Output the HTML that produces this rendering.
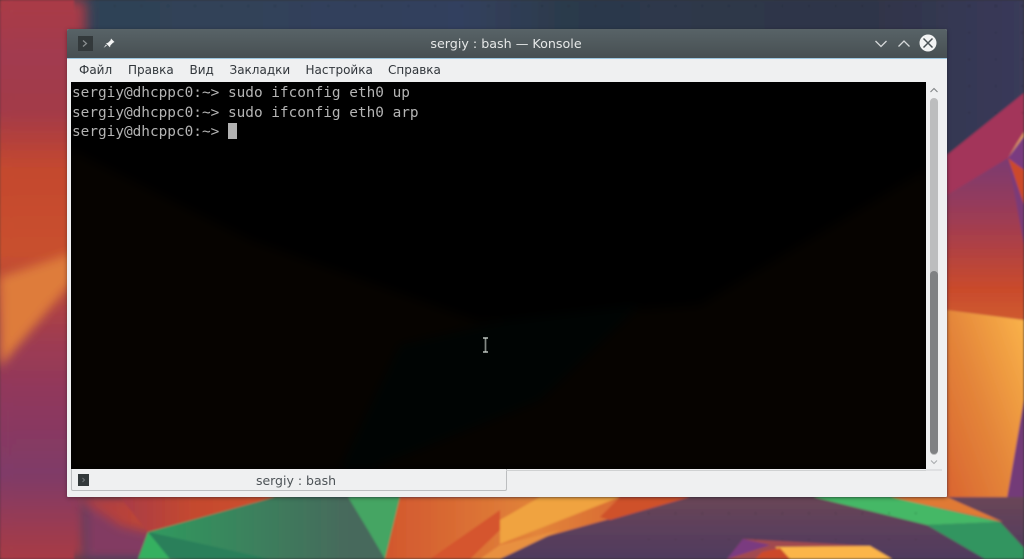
<!DOCTYPE html>
<html><head><meta charset="utf-8"><style>
html,body{margin:0;padding:0;width:1024px;height:559px;overflow:hidden;background:#333}
.a{position:absolute}
#win{left:67px;top:29px;width:880px;height:468px;background:#eff0f1;box-shadow:0 1px 4px rgba(0,0,0,.35);border-radius:2px 2px 1px 1px}
#tb{left:0;top:0;width:880px;height:29px;background:linear-gradient(#586367,#474f52);border-bottom:1px solid #9cc6e0;border-radius:2px 2px 0 0}
.t{font-family:"DejaVu Sans",sans-serif;white-space:nowrap;filter:blur(.3px)}
.m{top:62.5px;font-size:12px;line-height:15px;color:#31363b}
.l{left:72px;font-family:"DejaVu Sans Mono",monospace;font-size:14.4px;line-height:19px;color:#b4b4b4;white-space:pre;filter:blur(.3px)}
</style></head><body>
<svg class="a" style="left:0;top:0" width="1024" height="559" viewBox="0 0 1024 559">
<defs>
<filter id="b" x="-5%" y="-5%" width="110%" height="110%"><feGaussianBlur stdDeviation="1"/></filter>
<filter id="bb" x="-30%" y="-5%" width="160%" height="110%"><feGaussianBlur stdDeviation="6"/></filter>
<filter id="bc" x="-30%" y="-30%" width="160%" height="160%"><feGaussianBlur stdDeviation="5"/></filter>
<linearGradient id="lf" gradientUnits="userSpaceOnUse" x1="0" y1="0" x2="0" y2="559">
<stop offset="0" stop-color="#aa3a45"/><stop offset=".1" stop-color="#a23a50"/><stop offset=".2" stop-color="#a33a48"/><stop offset=".3" stop-color="#c4482f"/><stop offset=".45" stop-color="#c9502d"/><stop offset=".6" stop-color="#a03c50"/><stop offset=".68" stop-color="#93395a"/><stop offset=".85" stop-color="#7f3a68"/><stop offset=".95" stop-color="#9c3a50"/><stop offset="1" stop-color="#a83a45"/></linearGradient>
<linearGradient id="top" x1="0" y1="0" x2="1" y2="0">
<stop offset="0" stop-color="#2e4354"/><stop offset=".45" stop-color="#33415e"/><stop offset=".55" stop-color="#2c3a4c"/><stop offset=".85" stop-color="#2f3549"/><stop offset="1" stop-color="#3a3a5a"/></linearGradient>
<linearGradient id="rg" x1="0" y1="0" x2="0" y2="1">
<stop offset="0" stop-color="#7b3a72"/><stop offset=".4" stop-color="#a03c52"/><stop offset=".8" stop-color="#c94a2c"/><stop offset="1" stop-color="#cf5a30"/></linearGradient>
<linearGradient id="or" x1="1" y1="0" x2="0" y2="1">
<stop offset="0" stop-color="#fbb44a"/><stop offset=".5" stop-color="#e4863a"/><stop offset="1" stop-color="#d8602f"/></linearGradient>
<linearGradient id="gr" x1="0" y1="0" x2="1" y2="0">
<stop offset="0" stop-color="#2f9a5e"/><stop offset=".8" stop-color="#47695c"/><stop offset="1" stop-color="#47695c"/></linearGradient>
<linearGradient id="bo" x1="0" y1="0" x2="1" y2="0">
<stop offset="0" stop-color="#d2572e"/><stop offset=".5" stop-color="#e2843a"/><stop offset="1" stop-color="#d2562e"/></linearGradient>
<linearGradient id="pp" x1="0" y1="0" x2="0" y2="1">
<stop offset="0" stop-color="#6a4658"/><stop offset="1" stop-color="#4f3a5e"/></linearGradient>
<linearGradient id="br" x1="0" y1="0" x2="1" y2="0">
<stop offset="0" stop-color="#a83c48"/><stop offset=".4" stop-color="#c4482f"/><stop offset="1" stop-color="#d2552d"/></linearGradient>
<pattern id="dot" width="26.7" height="26.7" patternUnits="userSpaceOnUse" x="7" y="5"><circle cx="1" cy="1" r=".9" fill="#000" opacity=".25"/></pattern>
</defs>
<g filter="url(#b)">
<rect width="1024" height="559" fill="url(#top)"/>
<rect x="0" y="0" width="74" height="559" fill="url(#lf)"/>
<rect x="0" y="0" width="86" height="559" fill="url(#lf)" filter="url(#bb)"/>
<polygon points="0,277 72,253 72,282 0,367" fill="#de7b3a" filter="url(#bc)"/>
<!-- right -->
<polygon points="947,155 1024,93 1024,559 947,559" fill="#a3365a"/>
<polygon points="947,195 1008,158 1024,172 1024,320 947,310" fill="url(#rg)"/>
<polygon points="1008,158 1024,132 1024,172" fill="#7a3a80"/>
<polygon points="1008,158 1017,143 1024,132 1024,136" fill="#e8a060"/>
<polygon points="1008,158 1024,170 1024,205" fill="#cc4a2a"/>
<polygon points="1008,158 1024,205 1024,245" fill="#7a3a78"/>
<polygon points="947,310 1024,320 1024,400 1003,522 947,497" fill="url(#or)"/>
<polygon points="1024,400 1003,522 1024,508" fill="#733a78"/>
<polygon points="1003,522 1024,500 1024,548" fill="#3c5258"/>
<!-- bottom -->
<rect x="150" y="497" width="874" height="62" fill="url(#pp)"/>
<rect x="85" y="497" width="90" height="62" fill="#823a62" filter="url(#bc)"/>
<polygon points="75,497 300,497 148,532 120,526" fill="url(#br)" filter="url(#bc)"/>
<polygon points="120,497 300,497 148,532" fill="url(#br)"/>
<polygon points="275,497 400,497 385,559 148,559 148,532" fill="url(#gr)"/>
<polygon points="348,497 400,497 385,559 368,530" fill="#45a563"/>
<polygon points="148,532 170,559 138,559" fill="#35b060"/>
<polygon points="148,532 270,559 170,559" fill="#2a7f5a"/>
<polygon points="400,497 690,497 500,549 500,559 385,559" fill="url(#bo)"/>
<polygon points="500,520 540,497 620,497 500,544" fill="#f0a340"/>
<polygon points="430,559 500,510 500,530 470,559" fill="#d5552e"/>
<polygon points="480,559 500,545 560,530 500,559" fill="#e89040"/>
<polygon points="620,497 690,497 610,520 600,517" fill="#cf512c"/>
<polygon points="890,497 947,497 1003,522" fill="#e07a34"/>
<polygon points="813,497 890,497 1000,522 927,525" fill="#44b866"/>
<polygon points="927,525 1000,522 1024,548 1024,559 985,559" fill="#329560"/>
<polygon points="743,539 870,546 892,559 727,559" fill="#a14a50"/>
<polygon points="743,539 770,545 727,559" fill="#7a3a80"/>
<polygon points="775,547 870,546 892,559 790,559" fill="#fbb548"/>
<polygon points="762,552 780,548 790,559 755,559" fill="#cc4a2a"/>
<rect x="95" y="0" width="929" height="29" fill="url(#dot)"/>
<rect x="947" y="0" width="77" height="120" fill="url(#dot)"/>
<rect x="640" y="500" width="300" height="40" fill="url(#dot)"/>
</g>
</svg>

<div class="a" id="win">
 <div class="a" id="tb"></div>
</div>

<!-- titlebar -->
<svg class="a" style="left:67px;top:29px" width="880" height="30" viewBox="67 29 880 30">
<rect x="78" y="36" width="15" height="15" fill="#33393b"/>
<path d="M83 40.500l3.500 3-3.500 3" fill="none" stroke="#8b9092" stroke-width="1.200"/>
<path d="M111 38.500l3.500 3.500-1.500.8-2.600 2.600-.4 2-4-4 2-.6 2.600-2.600z" fill="#f4f5f5"/>
<path d="M106 44.500l-2.400 3.400 3.300-2.400z" fill="#eff0f1"/>
<path d="M875.500 41l5.500 5.500 5.500-5.500" fill="none" stroke="#d6d9da" stroke-width="1.300"/>
<path d="M898.500 46.500l5.500-5.500 5.500 5.500" fill="none" stroke="#d6d9da" stroke-width="1.300"/>
<circle cx="928" cy="43" r="8.500" fill="#f2f3f3"/>
<path d="M923.500 38.500l9 9m0-9l-9 9" stroke="#4a5255" stroke-width="1.500" fill="none"/>
</svg>
<div class="a t" style="left:300px;top:36px;width:412px;text-align:center;font-size:12.700px;line-height:15px;color:#e6e8e8">sergiy : bash — Konsole</div>

<!-- menu -->
<div class="a t m" style="left:79px">Файл</div>
<div class="a t m" style="left:128px">Правка</div>
<div class="a t m" style="left:189.500px">Вид</div>
<div class="a t m" style="left:229.500px">Закладки</div>
<div class="a t m" style="left:305.500px">Настройка</div>
<div class="a t m" style="left:388px">Справка</div>

<!-- terminal -->
<div class="a" style="left:71px;top:82px;width:855px;height:387px;background:#000;overflow:hidden">
<svg width="855" height="387" viewBox="71 82 855 387" style="position:absolute;left:0;top:0;filter:blur(5px)">
<polygon points="71,150 250,240 480,322 700,305 926,170 926,469 71,469" fill="#060300"/>
<polygon points="400,345 510,320 640,305 540,400 370,469 340,469" fill="#000403"/>
</svg>
</div>
<div class="a l" style="top:84px">sergiy@dhcppc0:~&gt; sudo ifconfig eth0 up</div>
<div class="a l" style="top:103.500px">sergiy@dhcppc0:~&gt; sudo ifconfig eth0 arp</div>
<div class="a l" style="top:123px">sergiy@dhcppc0:~&gt;</div>
<div class="a" style="left:228px;top:123px;width:9px;height:16px;background:#b2b2b2"></div>

<!-- mouse cursor -->
<svg class="a" style="left:481px;top:337px" width="9" height="16" viewBox="0 0 9 16">
<path d="M2 1h5M2 15h5M4.500 1v14" stroke="#b9c0bb" stroke-width="1.500" fill="none"/>
<path d="M4.500 2v12" stroke="#6b706c" stroke-width=".7" fill="none"/>
</svg>

<!-- scrollbar -->
<svg class="a" style="left:926px;top:82px" width="21" height="390" viewBox="926 82 21 390">
<path d="M930.500 92l3.500-3.500 3.500 3.500" fill="none" stroke="#7f8385" stroke-width="1.100"/>
<rect x="930" y="98" width="8" height="357" rx="4" fill="#bcbdbe"/>
<rect x="930" y="271" width="8" height="183" rx="4" fill="#7f8183"/>
<path d="M931 460.500l3 3 3-3" fill="none" stroke="#a8abad" stroke-width="1"/>
<rect x="926" y="469.500" width="16" height="1" fill="#cfd1d2"/>
</svg>

<!-- tab bar -->
<div class="a" style="left:71px;top:469px;width:434px;height:21px;background:#eff0f1;border:1px solid #bcbec0;border-top:0;border-radius:0 0 2px 2px"></div>
<div class="a" style="left:506px;top:470px;width:420px;height:1px;background:#cfd1d2"></div>
<svg class="a" style="left:78px;top:474px" width="12" height="12" viewBox="0 0 12 12">
<rect width="11" height="12" fill="#33393b"/><path d="M4.500 4l2 2-2 2" fill="none" stroke="#70767a" stroke-width="1"/>
</svg>
<div class="a t" style="left:196px;top:473px;width:200px;text-align:center;font-size:12.500px;line-height:16px;color:#4d5357">sergiy : bash</div>
</body></html>
